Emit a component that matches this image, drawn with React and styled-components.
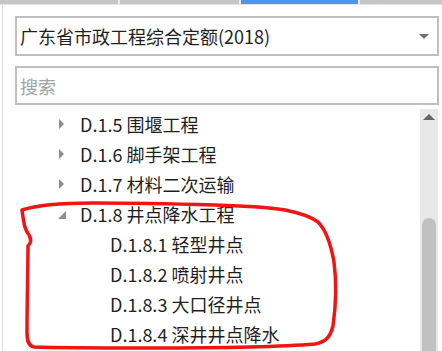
import React from 'react';
import styled, { createGlobalStyle } from 'styled-components';

const GlobalStyle = createGlobalStyle`
  html, body {
    margin: 0;
    padding: 0;
    background: #ffffff;
  }
  body {
    font-family: "Noto Sans CJK SC", "Noto Sans", sans-serif;
  }
`;

const Frame = styled.div`
  position: relative;
  width: 442px;
  height: 351px;
  overflow: hidden;
  background: #ffffff;
`;

const TabStrip = styled.div`
  display: flex;
  height: 4px;
  gap: 2px;
  background: #ebebeb;
  border-bottom: 1px solid #e6e6e6;
`;

const Tab = styled.div`
  flex: 0 0 ${(p) => p.$w}px;
  background: ${(p) => (p.$active ? '#4a95f0' : '#c6c6c6')};
`;

const Panel = styled.div`
  margin-left: 2px;
  border-left: 1px solid #dcdcdc;
  height: 346px;
  display: flex;
  flex-direction: column;
  padding: 11px 3px 0 12px;
  box-sizing: border-box;
`;

const Field = styled.div`
  height: ${(p) => p.$h}px;
  box-sizing: border-box;
  border: 2px solid #bfbfbf;
  display: flex;
  align-items: center;
  justify-content: space-between;
  padding: 0 8px 0 3px;
  font-size: 18px;
  color: ${(p) => (p.$placeholder ? '#a2a2a2' : '#1f1f1f')};
  margin-bottom: ${(p) => p.$mb || 0}px;
`;

const DropArrow = styled.span`
  width: 0;
  height: 0;
  border-left: 5px solid transparent;
  border-right: 5px solid transparent;
  border-top: 5px solid #707070;
`;

const TreeArea = styled.div`
  flex: 1;
  display: flex;
  margin-top: 4px;
  margin-left: -12px;
`;

const TreeList = styled.div`
  flex: 1;
  display: flex;
  flex-direction: column;
`;

const Row = styled.div`
  height: 30px;
  display: flex;
  align-items: center;
  padding-left: ${(p) => (p.$level === 0 ? 52 : 107)}px;
  font-size: 18px;
  color: #1f1f1f;
  white-space: nowrap;
`;

const Toggle = styled.span`
  width: 25px;
  display: flex;
  align-items: center;
`;

const Collapsed = styled.span`
  width: 0;
  height: 0;
  border-top: 5px solid transparent;
  border-bottom: 5px solid transparent;
  border-left: 5px solid #8c8c8c;
  margin-left: 4px;
`;

const Expanded = styled.span`
  width: 0;
  height: 0;
  border-left: 8px solid transparent;
  border-bottom: 8px solid #8c8c8c;
  margin-left: 3px;
  margin-top: 2px;
`;

const Scrollbar = styled.div`
  width: 18px;
  margin-right: 1px;
  background: #e8e8e8;
  display: flex;
  flex-direction: column;
  align-items: center;
`;

const UpArrow = styled.span`
  margin-top: 5px;
  width: 0;
  height: 0;
  border-left: 6px solid transparent;
  border-right: 6px solid transparent;
  border-bottom: 6px solid #666670;
`;

const Thumb = styled.div`
  margin-top: 98px;
  width: 14px;
  flex: 1;
  background: #c1c1c1;
  border-radius: 7px 7px 0 0;
`;

const Annotation = styled.svg`
  position: absolute;
  left: 0;
  top: 0;
  pointer-events: none;
`;

const rows = [
  { level: 0, label: 'D.1.5 围堰工程', state: 'closed' },
  { level: 0, label: 'D.1.6 脚手架工程', state: 'closed' },
  { level: 0, label: 'D.1.7 材料二次运输', state: 'closed' },
  { level: 0, label: 'D.1.8 井点降水工程', state: 'open' },
  { level: 1, label: 'D.1.8.1 轻型井点' },
  { level: 1, label: 'D.1.8.2 喷射井点' },
  { level: 1, label: 'D.1.8.3 大口径井点' },
  { level: 1, label: 'D.1.8.4 深井井点降水' },
];

export default function App() {
  return (
    <Frame>
      <GlobalStyle />
      <TabStrip>
        <Tab $w={118} />
        <Tab $w={119} />
        <Tab $w={117} $active />
        <Tab $w={82} />
      </TabStrip>
      <Panel>
        <Field $h={40} $mb={10}>
          <span>广东省市政工程综合定额(2018)</span>
          <DropArrow />
        </Field>
        <Field $h={39} $placeholder>
          <span>搜索</span>
        </Field>
        <TreeArea>
          <TreeList>
            {rows.map((r) => (
              <Row key={r.label} $level={r.level}>
                {r.level === 0 && (
                  <Toggle>{r.state === 'open' ? <Expanded /> : <Collapsed />}</Toggle>
                )}
                {r.label}
              </Row>
            ))}
          </TreeList>
          <Scrollbar>
            <UpArrow />
            <Thumb />
          </Scrollbar>
        </TreeArea>
      </Panel>
      <Annotation width="442" height="351" viewBox="0 0 442 351">
        <path
          d="M22 210 C40 204 70 203 92 203 C140 203 180 204 215 205 C245 206 268 207 285 210 C300 213 310 216 318 222 C326 230 331 245 334 262 C337 285 336 305 333 326 C330 338 325 342 315 344 C280 347 200 348 148 348 C100 348 60 348 34 347 C28 346 27 340 27 332 C27 300 28 270 28 246 C31 243 32 240 29 235 C25 230 24 225 22 210 Z"
          fill="none"
          stroke="#f01414"
          strokeWidth="3.5"
          strokeLinejoin="round"
        />
      </Annotation>
    </Frame>
  );
}
